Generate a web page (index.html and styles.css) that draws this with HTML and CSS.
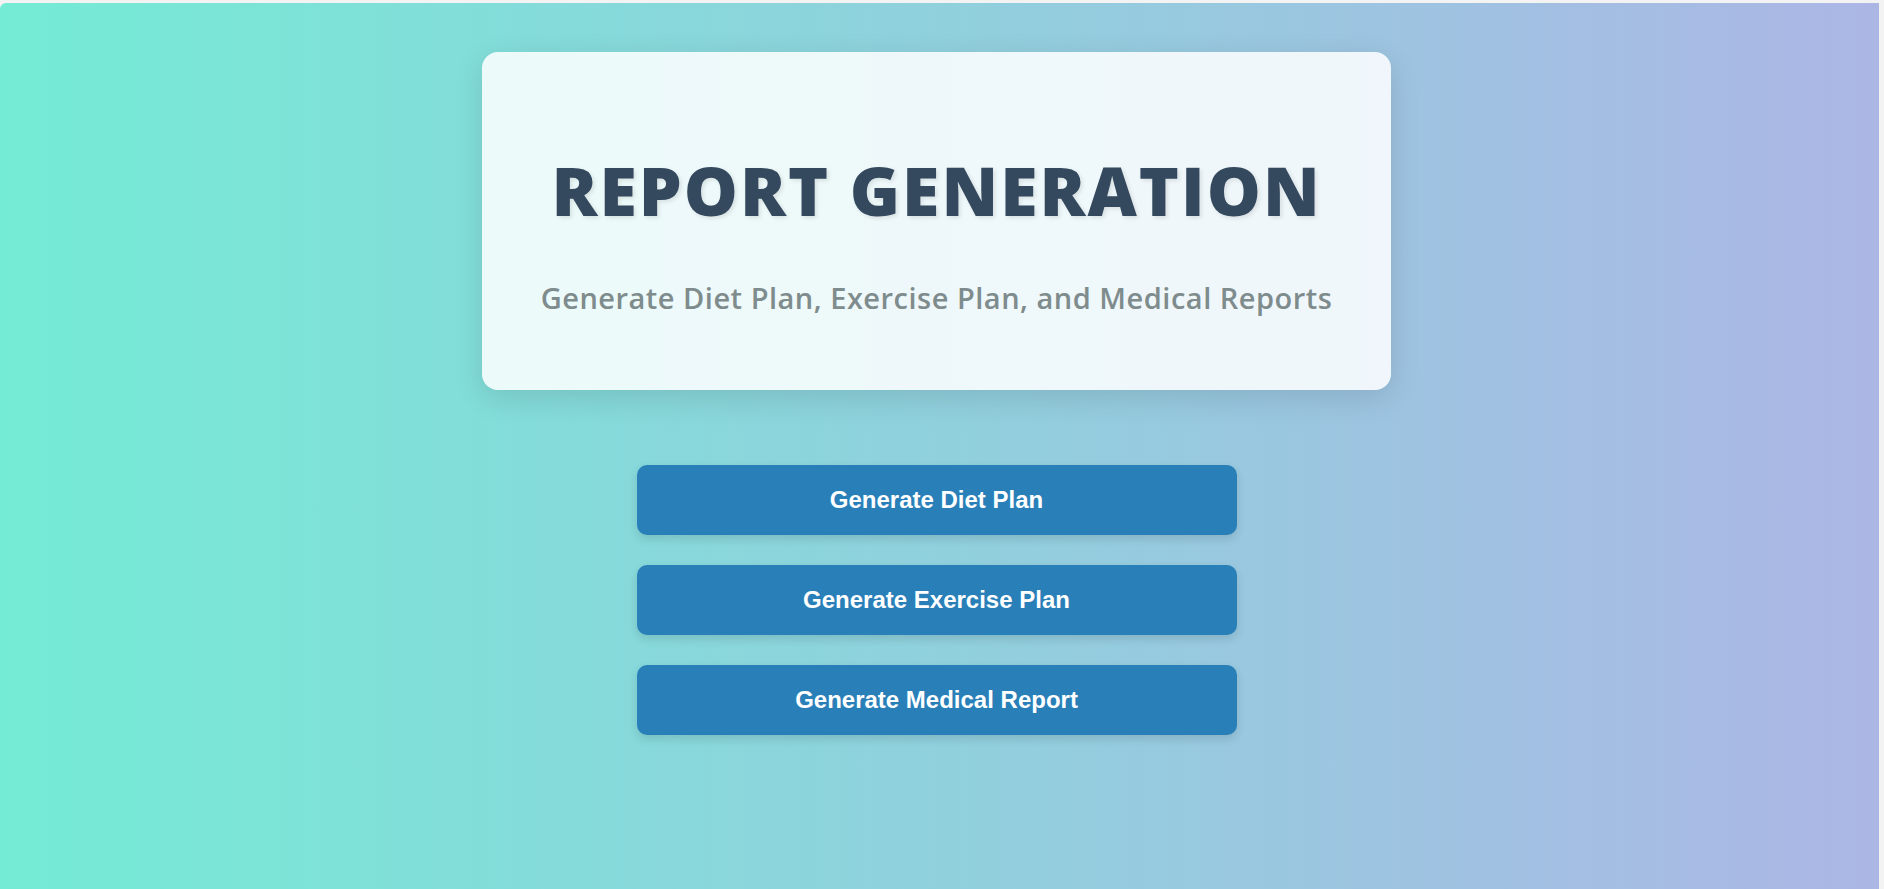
FILE: index.html
```html
<!DOCTYPE html>
<html lang="en">
<head>
<meta charset="utf-8">
<title>Report Generation</title>
<link rel="stylesheet" href="styles.css">
</head>
<body>
<div class="page">
  <div class="card">
    <h1 class="title">REPORT GENERATION</h1>
    <p class="subtitle">Generate Diet Plan, Exercise Plan, and Medical Reports</p>
  </div>
  <div class="actions">
    <button class="btn">Generate Diet Plan</button>
    <button class="btn">Generate Exercise Plan</button>
    <button class="btn">Generate Medical Report</button>
  </div>
</div>
</body>
</html>
```
FILE: styles.css
```css
html, body {
  margin: 0;
  padding: 0;
  height: 100%;
}
body {
  background: #f3f3f3;
  overflow: hidden;
}
.page {
  margin-top: 3px;
  margin-right: 5px;
  height: 886px;
  border-top-left-radius: 6px;
  background: linear-gradient(to right, #74ebd5, #acb6e5);
  display: flex;
  flex-direction: column;
  align-items: center;
  padding-top: 49px;
  box-sizing: border-box;
  font-family: "Open Sans", "Noto Sans", sans-serif;
}
.card {
  width: 909px;
  box-sizing: border-box;
  padding: 97px 20px 72px;
  background: rgba(255, 255, 255, 0.85);
  border-radius: 16px;
  box-shadow: 0 8px 30px rgba(0, 0, 0, 0.12);
  text-align: center;
  margin-left: -6px;
}
.title {
  margin: 0;
  font-size: 68px;
  line-height: 82px;
  font-weight: 800;
  letter-spacing: 2px;
  color: #34495e;
  text-shadow: 2px 2px 4px rgba(0, 0, 0, 0.1);
}
.subtitle {
  margin: 47px 0 0;
  font-size: 29px;
  line-height: 40px;
  font-weight: 600;
  letter-spacing: 0.5px;
  color: #7f8c8d;
}
.actions {
  margin-top: 75px;
  display: flex;
  flex-direction: column;
  gap: 30px;
  margin-left: -6px;
}
.btn {
  width: 600px;
  height: 70px;
  border: none;
  border-radius: 10px;
  background: #2980b9;
  color: #fff;
  font-family: "Liberation Sans", Arial, sans-serif;
  font-weight: 700;
  font-size: 24px;
  box-shadow: 0 4px 10px rgba(0, 0, 0, 0.12);
  cursor: pointer;
  padding: 0;
}
```
